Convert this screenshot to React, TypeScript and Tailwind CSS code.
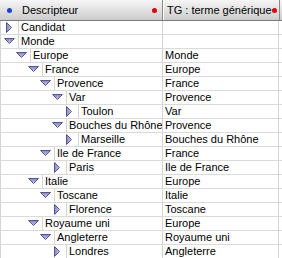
type Row = { level: number; name: string; leaf?: boolean; tg: string };

const rows: Row[] = [
  { level: 0, name: "Candidat", leaf: true, tg: "" },
  { level: 0, name: "Monde", tg: "" },
  { level: 1, name: "Europe", tg: "Monde" },
  { level: 2, name: "France", tg: "Europe" },
  { level: 3, name: "Provence", tg: "France" },
  { level: 4, name: "Var", tg: "Provence" },
  { level: 5, name: "Toulon", leaf: true, tg: "Var" },
  { level: 4, name: "Bouches du Rhône", tg: "Provence" },
  { level: 5, name: "Marseille", leaf: true, tg: "Bouches du Rhône" },
  { level: 3, name: "Ile de France", tg: "France" },
  { level: 4, name: "Paris", leaf: true, tg: "Ile de France" },
  { level: 2, name: "Italie", tg: "Europe" },
  { level: 3, name: "Toscane", tg: "Italie" },
  { level: 4, name: "Florence", leaf: true, tg: "Toscane" },
  { level: 2, name: "Royaume uni", tg: "Europe" },
  { level: 3, name: "Angleterre", tg: "Royaume uni" },
  { level: 4, name: "Londres", leaf: true, tg: "Angleterre" },
];

function Disclosure({ open }: { open: boolean }) {
  return (
    <svg width="17" height="13" viewBox="0 0 17 13" className="shrink-0">
      <defs>
        <linearGradient id={open ? "gd" : "gr"} x1="0" y1="0" x2={open ? "0" : "1"} y2={open ? "1" : "0"}>
          <stop offset="0" stopColor="#8585c8" />
          <stop offset="1" stopColor="#c4c4f0" />
        </linearGradient>
      </defs>
      {open ? (
        <polygon
          points="3.5,3.5 13.5,3.5 8.5,8.5"
          fill="url(#gd)"
          stroke="#4a4a86"
          strokeWidth="0.9"
          strokeLinejoin="round"
        />
      ) : (
        <polygon
          points="5.5,1.5 10.5,6.5 5.5,11.5"
          fill="url(#gr)"
          stroke="#4a4a86"
          strokeWidth="0.9"
          strokeLinejoin="round"
        />
      )}
    </svg>
  );
}

function Dot({ color }: { color: string }) {
  return <span className={`block w-[5px] h-[5px] rounded-full ${color}`} />;
}

export default function App() {
  return (
    <div
      className="w-[282px] h-[258px] overflow-hidden bg-white text-black text-[11px]"
      style={{ fontFamily: "'Liberation Sans', Arial, sans-serif" }}
    >
      {/* Header */}
      <div className="flex h-[21px] border-b border-[#7a7a7a] bg-gradient-to-b from-[#f6f6f6] to-[#cccccc]">
        <div className="flex items-center w-[163px] border-r border-[#8a8a8a] shadow-[1px_0_0_#ffffff]">
          <span className="ml-[7px] mr-[10px]">
            <Dot color="bg-[#1f3fd8]" />
          </span>
          <span className="flex-1 leading-[20px]">Descripteur</span>
          <span className="mr-[5px]">
            <Dot color="bg-[#e00000]" />
          </span>
        </div>
        <div className="flex items-center w-[117px] border-r border-[#8a8a8a]">
          <span className="flex-1 pl-[4px] leading-[20px] whitespace-nowrap">TG : terme générique</span>
          <span className="mr-[4px]">
            <Dot color="bg-[#e00000]" />
          </span>
        </div>
      </div>

      {/* Rows */}
      {rows.map((r, i) => (
        <div key={i} className="flex h-[14px] border-b border-[#dadada]">
          <div className="flex w-[163px] border-l border-r border-[#d4d4d4]">
            <div className="shrink-0" style={{ width: r.level * 12 }} />
            <Disclosure open={!r.leaf} />
            <div className="flex-1 border-l border-[#d4d4d4] pl-[2px] leading-[13px] whitespace-nowrap overflow-hidden">
              {r.name}
            </div>
          </div>
          <div className="w-[116px] border-r border-[#d4d4d4] pl-[2px] leading-[13px] whitespace-nowrap overflow-hidden">
            {r.tg}
          </div>
        </div>
      ))}
    </div>
  );
}
